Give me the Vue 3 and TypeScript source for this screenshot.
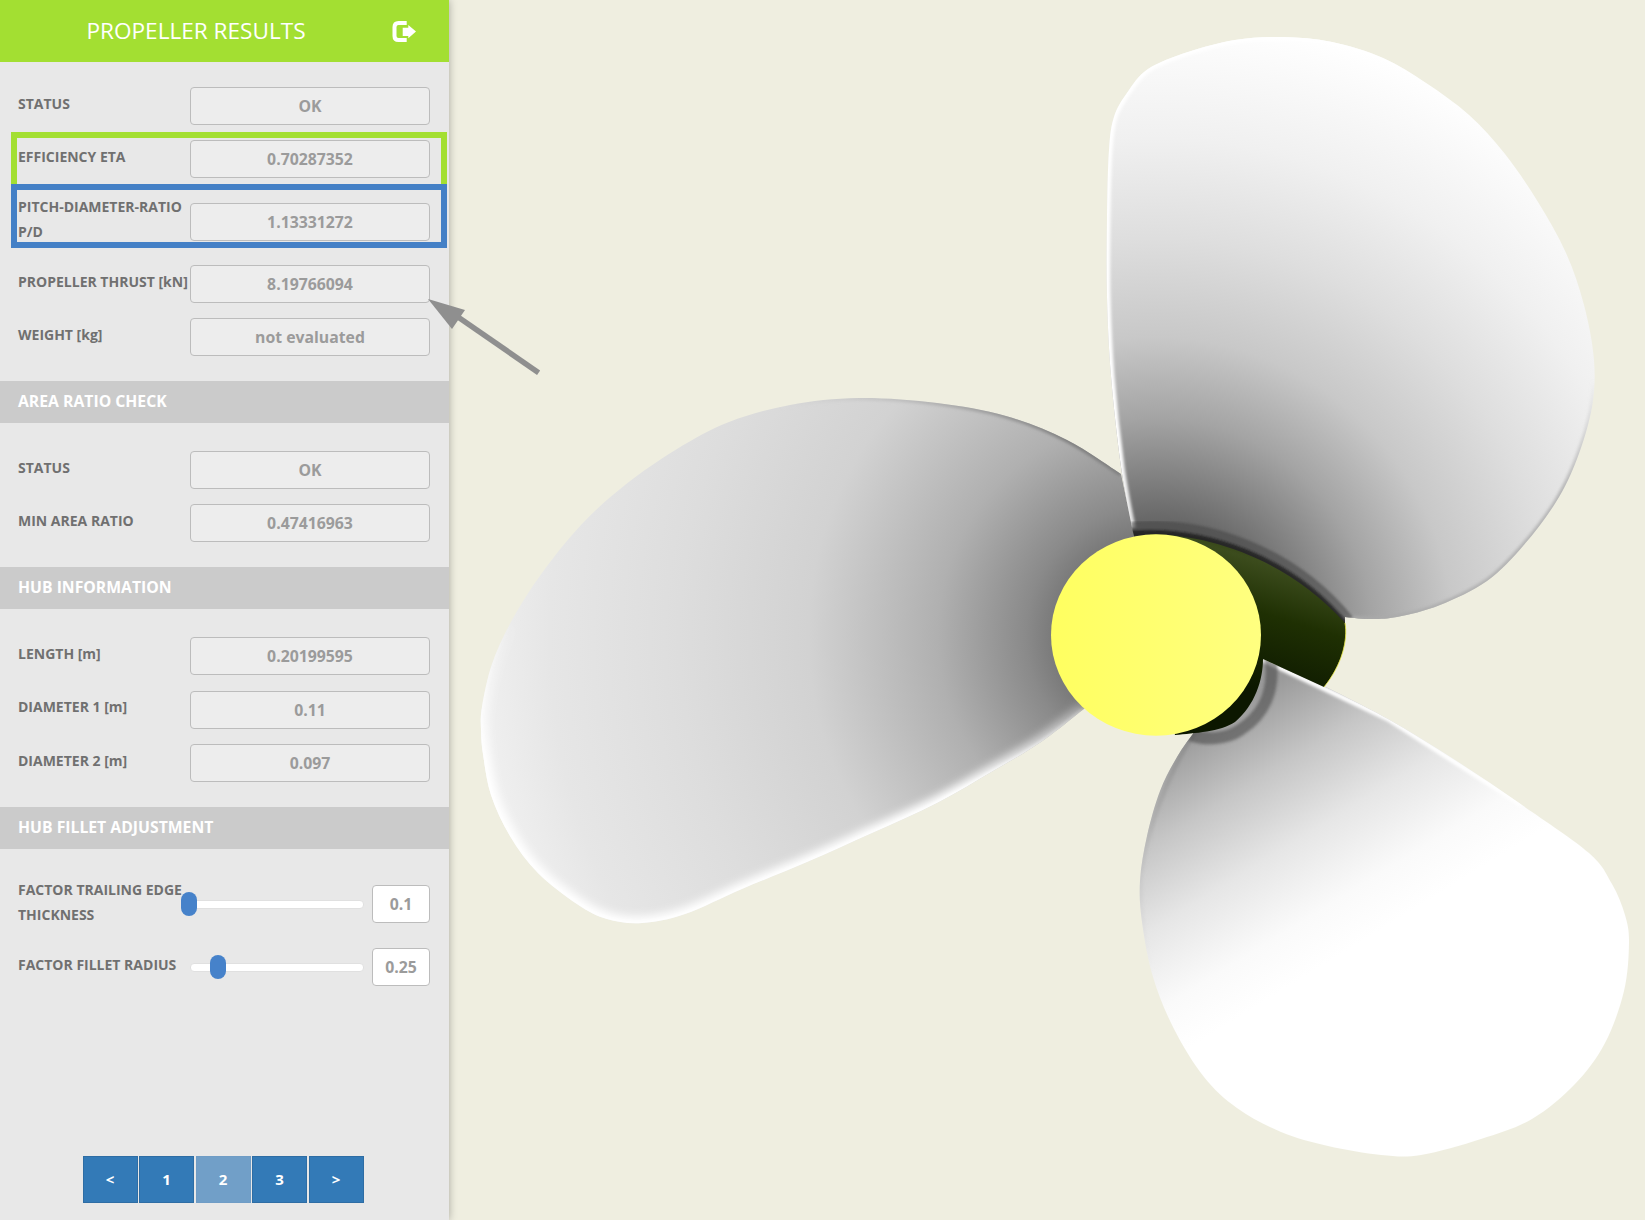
<script setup lang="ts">
type Pt = [number, number]

const results = [
  { label: 'STATUS', value: 'OK' },
  { label: 'EFFICIENCY ETA', value: '0.70287352', mark: 'green' },
  { label: 'PITCH-DIAMETER-RATIO P/D', value: '1.13331272', mark: 'blue', tall: true },
  { label: 'PROPELLER THRUST [kN]', value: '8.19766094' },
  { label: 'WEIGHT [kg]', value: 'not evaluated' },
]
const areaRatio = [
  { label: 'STATUS', value: 'OK' },
  { label: 'MIN AREA RATIO', value: '0.47416963' },
]
const hubInfo = [
  { label: 'LENGTH [m]', value: '0.20199595' },
  { label: 'DIAMETER 1 [m]', value: '0.11' },
  { label: 'DIAMETER 2 [m]', value: '0.097' },
]
const fillet = [
  { label: 'FACTOR TRAILING EDGE THICKNESS', value: 0.1, tall: true },
  { label: 'FACTOR FILLET RADIUS', value: 0.25 },
]
const pages = ['<', '1', '2', '3', '>']

// slider thumb travels 174px over 0.1 .. 1
const thumbLeft = (v: number) => `${-10 + ((v - 0.1) / 0.9) * 174}px`

// catmull-rom through the traced points
function spline(p: Pt[]): string {
  const at = (i: number) => p[Math.max(0, Math.min(p.length - 1, i))]
  let d = `M${p[0][0]},${p[0][1]}`
  for (let i = 0; i < p.length - 1; i++) {
    const [a, b, c, e] = [at(i - 1), at(i), at(i + 1), at(i + 2)]
    const c1 = [b[0] + (c[0] - a[0]) / 6, b[1] + (c[1] - a[1]) / 6]
    const c2 = [c[0] - (e[0] - b[0]) / 6, c[1] - (e[1] - b[1]) / 6]
    d += `C${c1[0].toFixed(1)},${c1[1].toFixed(1)} ${c2[0].toFixed(1)},${c2[1].toFixed(1)} ${c[0]},${c[1]}`
  }
  return d
}

const upper: Pt[] = [
  [1132, 528], [1121, 467], [1111, 376], [1107, 297], [1107, 218], [1109, 150], [1114, 117], [1127, 93], [1148, 69],
  [1188, 52], [1235, 40], [1282, 37], [1332, 42], [1383, 58], [1426, 83], [1469, 115], [1505, 154],
  [1538, 202], [1566, 253], [1584, 305], [1594, 360], [1592, 407], [1577, 459], [1556, 502], [1523, 546],
  [1487, 581], [1440, 605], [1397, 617], [1368, 619], [1345, 617],
]
const left: Pt[] = [
  [1121, 474], [1067, 440], [1006, 416], [937, 403], [859, 398], [790, 405], [729, 422], [677, 449], [625, 485],
  [581, 525], [542, 573], [512, 620], [492, 664], [482, 707], [481, 729], [483, 754], [491, 795], [510, 836],
  [538, 873], [577, 904], [607, 919], [642, 923], [685, 914], [742, 889], [807, 862], [872, 833],
  [937, 803], [993, 771], [1041, 742], [1085, 708],
]
const lower: Pt[] = [
  [1324, 686], [1388, 719], [1455, 760], [1522, 805], [1589, 853], [1612, 884], [1625, 915], [1629, 943],
  [1624, 991], [1605, 1043], [1575, 1084], [1532, 1119], [1481, 1139], [1421, 1155], [1381, 1155], [1328, 1146],
  [1281, 1132], [1237, 1108], [1204, 1077], [1174, 1029], [1153, 977], [1142, 922], [1140, 881], [1147, 836],
  [1160, 791], [1177, 757], [1195, 731],
]

const upperPath = spline(upper) + 'L1345,640L1200,620L1140,560Z'
const leftPath = spline(left) + 'L1135,540Z'
const lowerPath = spline(lower) + 'L1230,700L1262,659Z'

const upperGlow = spline(upper.slice(0, 17))
const upperShade = spline(upper.slice(20))
const leftGlow = spline(left.slice(9))
const leftShade = spline(left.slice(0, 7))
</script>

<template>
  <div class="page">
    <aside class="panel">
      <header class="panel-head">
        <h1>PROPELLER RESULTS</h1>
        <svg class="exit" viewBox="0 0 24 21" width="24" height="21">
          <path d="M14.7 2H6.5Q2.5 2 2.5 6V15Q2.5 19 6.5 19H14.7" fill="none" stroke="#fff" stroke-width="4" />
          <path d="M10.7 6.7H16.3V4L24 10.5L16.3 17.3V15H10.7Z" fill="#fff" />
        </svg>
      </header>

      <section class="group first">
        <div v-for="r in results" :key="r.label" class="row" :class="{ tall: r.tall }">
          <span v-if="r.mark" class="mark" :class="r.mark"></span>
          <label>{{ r.label }}</label>
          <div class="value">{{ r.value }}</div>
        </div>
      </section>

      <h2 class="bar">AREA RATIO CHECK</h2>
      <section class="group tight">
        <div v-for="r in areaRatio" :key="r.label" class="row">
          <label>{{ r.label }}</label>
          <div class="value">{{ r.value }}</div>
        </div>
      </section>

      <h2 class="bar">HUB INFORMATION</h2>
      <section class="group hub">
        <div v-for="r in hubInfo" :key="r.label" class="row">
          <label>{{ r.label }}</label>
          <div class="value">{{ r.value }}</div>
        </div>
      </section>

      <h2 class="bar">HUB FILLET ADJUSTMENT</h2>
      <section class="group sliders">
        <div v-for="f in fillet" :key="f.label" class="row" :class="{ tall: f.tall }">
          <label>{{ f.label }}</label>
          <div class="track">
            <span class="thumb" :style="{ left: thumbLeft(f.value) }"></span>
          </div>
          <div class="value small">{{ f.value }}</div>
        </div>
      </section>

      <nav class="pager">
        <a v-for="p in pages" :key="p" :class="{ active: p === '2' }">{{ p }}</a>
      </nav>
    </aside>

    <main class="view">
      <svg viewBox="449 0 1196 1220" width="1196" height="1220">
        <defs>
          <radialGradient id="shadeUpper" gradientUnits="userSpaceOnUse" cx="1155" cy="635" r="620">
            <stop offset="0.16" stop-color="#5e5e5e" />
            <stop offset="0.35" stop-color="#a4a4a4" />
            <stop offset="0.48" stop-color="#c8c8c8" />
            <stop offset="0.64" stop-color="#dedede" />
            <stop offset="0.8" stop-color="#f0f0f0" />
            <stop offset="1" stop-color="#ffffff" />
          </radialGradient>
          <radialGradient id="shadeLeft" gradientUnits="userSpaceOnUse" cx="1155" cy="635" r="680">
            <stop offset="0.12" stop-color="#6e6e6e" />
            <stop offset="0.19" stop-color="#8a8a8a" />
            <stop offset="0.32" stop-color="#b0b0b0" />
            <stop offset="0.51" stop-color="#d2d2d2" />
            <stop offset="0.7" stop-color="#dddddd" />
            <stop offset="0.89" stop-color="#e6e6e6" />
            <stop offset="1" stop-color="#f0f0f0" />
          </radialGradient>
          <linearGradient id="shadeLower" gradientUnits="userSpaceOnUse" x1="1195" y1="731" x2="1335" y2="958">
            <stop offset="0" stop-color="#9a9a9a" />
            <stop offset="0.28" stop-color="#c6c6c6" />
            <stop offset="0.55" stop-color="#e6e6e6" />
            <stop offset="0.82" stop-color="#fafafa" />
            <stop offset="1" stop-color="#ffffff" />
          </linearGradient>
          <linearGradient id="barrel" gradientUnits="userSpaceOnUse" x1="1300" y1="545" x2="1255" y2="690">
            <stop offset="0" stop-color="#233405" />
            <stop offset="0.18" stop-color="#3c4c1d" />
            <stop offset="0.5" stop-color="#1f3003" />
            <stop offset="1" stop-color="#0c1700" />
          </linearGradient>
          <linearGradient id="cap" x1="0" y1="0" x2="1" y2="0">
            <stop offset="0" stop-color="#ffff60" />
            <stop offset="1" stop-color="#ffff80" />
          </linearGradient>

          <!-- edge strokes fade out along the outline so they have no visible ends -->
          <linearGradient id="fadeUpperGlow" gradientUnits="userSpaceOnUse" x1="1300" y1="60" x2="1505" y2="154">
            <stop offset="0" stop-color="#fff" />
            <stop offset="1" stop-color="#fff" stop-opacity="0" />
          </linearGradient>
          <linearGradient id="fadeUpperShade" gradientUnits="userSpaceOnUse" x1="1594" y1="380" x2="1560" y2="490">
            <stop offset="0" stop-color="#aaa" stop-opacity="0" />
            <stop offset="1" stop-color="#aaa" stop-opacity="0.8" />
          </linearGradient>
          <linearGradient id="fadeLeftShade" gradientUnits="userSpaceOnUse" x1="1067" y1="440" x2="780" y2="405">
            <stop offset="0" stop-color="#808080" />
            <stop offset="1" stop-color="#bbb" stop-opacity="0" />
          </linearGradient>
          <linearGradient id="fadeLeftGlow" gradientUnits="userSpaceOnUse" x1="500" y1="620" x2="490" y2="760">
            <stop offset="0" stop-color="#fff" stop-opacity="0" />
            <stop offset="1" stop-color="#fff" />
          </linearGradient>
          <linearGradient id="fadeLowerShade" gradientUnits="userSpaceOnUse" x1="1170" y1="740" x2="1148" y2="970">
            <stop offset="0" stop-color="#8e8e8e" />
            <stop offset="1" stop-color="#ddd" stop-opacity="0" />
          </linearGradient>

          <filter id="soft" x="-10%" y="-10%" width="120%" height="120%">
            <feGaussianBlur stdDeviation="1.6" />
          </filter>
          <filter id="tight" x="-10%" y="-10%" width="120%" height="120%">
            <feGaussianBlur stdDeviation="0.8" />
          </filter>
          <filter id="wide" x="-10%" y="-10%" width="120%" height="120%">
            <feGaussianBlur stdDeviation="4" />
          </filter>
          <clipPath id="clipUpper"><path :d="upperPath" /></clipPath>
          <clipPath id="clipLeft"><path :d="leftPath" /></clipPath>
          <clipPath id="clipLower"><path :d="lowerPath" /></clipPath>
        </defs>

        <path :d="leftPath" fill="url(#shadeLeft)" />
        <g clip-path="url(#clipLeft)">
          <path :d="leftGlow" class="edge" stroke="url(#fadeLeftGlow)" stroke-width="14" filter="url(#wide)" />
          <path :d="leftGlow" class="edge" stroke="url(#fadeLeftGlow)" stroke-width="3" filter="url(#soft)" />
          <path :d="leftShade" class="edge" stroke="url(#fadeLeftShade)" stroke-width="5" filter="url(#soft)" />
        </g>

        <path :d="upperPath" fill="url(#shadeUpper)" />
        <g clip-path="url(#clipUpper)">
          <path :d="upperGlow" class="edge" stroke="url(#fadeUpperGlow)" stroke-width="7" filter="url(#soft)" />
          <path :d="upperShade" class="edge" stroke="url(#fadeUpperShade)" stroke-width="5" filter="url(#soft)" />
          <path d="M1132,532C1205,525 1290,556 1345,623" class="edge" stroke="#444" stroke-width="20" opacity="0.55" filter="url(#tight)" />
          <path d="M1132,534C1205,529 1290,558 1345,625" class="edge" stroke="#1c1c1c" stroke-width="7" opacity="0.8" filter="url(#tight)" />
        </g>

        <path :d="lowerPath" fill="url(#shadeLower)" />
        <g clip-path="url(#clipLower)">
          <path d="M1262,659L1388,719L1522,805" class="edge" stroke="#fff" stroke-width="5" filter="url(#soft)" />
          <path d="M1195,731C1170,770 1145,830 1140,881C1140,920 1146,950 1153,977" class="edge" stroke="url(#fadeLowerShade)" stroke-width="5" filter="url(#soft)" />
          <path d="M1270,655C1276,690 1264,715 1240,730C1225,740 1205,740 1190,735" class="edge" stroke="#444" stroke-width="12" opacity="0.55" filter="url(#soft)" />
        </g>

        <path
          d="M1150,534C1215,535 1290,562 1345,623C1348,640 1342,665 1324,687L1263,659C1263,680 1255,705 1235,722C1220,732 1195,733 1175,735L1150,650Z"
          fill="url(#barrel)"
        />
        <path d="M1345,623C1348,640 1342,665 1324,687" fill="none" stroke="#e6e640" stroke-width="0.8" />
        <ellipse cx="1156" cy="635" rx="105" ry="100.7" fill="url(#cap)" />
      </svg>
    </main>

    <svg class="pointer" viewBox="0 0 114 78" width="114" height="78">
      <path d="M110.6 74.7L30 19" stroke="#8f8f8f" stroke-width="5.5" fill="none" />
      <path d="M0 1L37 12L24 31Z" fill="#8f8f8f" />
    </svg>
  </div>
</template>

<style>
body {
  margin: 0;
}
</style>

<style scoped>
.page {
  position: relative;
  display: flex;
  width: 1645px;
  height: 1220px;
  overflow: hidden;
  background: #efeee0;
  font-family: "Open Sans", "Liberation Sans", sans-serif;
}

.panel {
  position: relative;
  z-index: 1;
  display: flex;
  flex-direction: column;
  flex: 0 0 449px;
  background: #e8e8e8;
  box-shadow: 0 0 8px rgba(0, 0, 0, 0.3);
}

.panel-head {
  display: flex;
  align-items: center;
  box-sizing: border-box;
  height: 62px;
  padding-right: 33px;
  background: #a3df32;
  color: #fff;
}

.panel-head h1 {
  flex: 1;
  margin: 0 0 2px;
  font-size: 22.6px;
  font-weight: 400;
  text-align: center;
}

.group {
  display: flex;
  flex-direction: column;
  gap: 15px;
  padding: 28px 19px 26px 18px;
}

.group.first {
  padding-top: 25px;
  padding-bottom: 25px;
}

.group.tight {
  padding-bottom: 25px;
}

.group.hub {
  gap: 15.5px;
  padding-bottom: 25px;
}

.row {
  position: relative;
  display: flex;
  align-items: center;
  min-height: 38px;
}

.row.tall {
  margin: 2px 0 1px;
}

.row label {
  flex: 0 0 172px;
  margin-bottom: 6px;
  color: #707070;
  font-size: 14px;
  font-weight: 700;
  line-height: 25px;
}

.row.tall label {
  margin-bottom: 4px;
}

.first .row.tall label {
  margin-top: -1px;
  margin-bottom: 5px;
}

.value {
  flex: 1;
  box-sizing: border-box;
  height: 38px;
  border: 1px solid #bcbcbc;
  border-radius: 4px;
  background: #ededed;
  color: #9b9b9b;
  font-size: 15.8px;
  font-weight: 700;
  line-height: 36px;
  text-align: center;
}

.value.small {
  flex: 0 0 58px;
  background: #fff;
}

.mark {
  position: absolute;
  box-sizing: border-box;
  border: 6px solid;
  left: -7px;
  right: -17px;
}

.mark.green {
  top: -8px;
  bottom: -12px;
  border-color: #a3df32;
}

.mark.blue {
  top: -11px;
  bottom: 1px;
  border-color: #4480c6;
}

.bar {
  height: 42px;
  margin: 0;
  padding-left: 18px;
  background: #cbcbcb;
  color: #fff;
  font-size: 15.75px;
  font-weight: 700;
  line-height: 40px;
}

.sliders {
  gap: 17px;
}

.sliders .row.tall {
  margin: 0;
}

.track {
  position: relative;
  flex: 0 0 174px;
  box-sizing: border-box;
  height: 9px;
  margin-right: 8px;
  border: 1px solid #e0e0e0;
  border-radius: 4px;
  background: #fff;
}

.thumb {
  position: absolute;
  top: -9px;
  width: 16px;
  height: 24px;
  border-radius: 8px;
  background: #4682ca;
}

.pager {
  display: flex;
  justify-content: center;
  gap: 1.5px;
  margin-top: auto;
  margin-right: 3px;
  padding-bottom: 17px;
}

.pager a {
  box-sizing: border-box;
  width: 55px;
  height: 47px;
  border: 1px solid #2e6da4;
  background: #337ab7;
  color: #fff;
  font-size: 15px;
  font-weight: 700;
  line-height: 45px;
  text-align: center;
}

.pager a.active {
  border-color: #6f9cc5;
  background: #719fc8;
}

.view {
  flex: 1;
}

.view svg {
  display: block;
}

.edge {
  fill: none;
}

.pointer {
  position: absolute;
  z-index: 2;
  left: 428px;
  top: 298px;
}
</style>
